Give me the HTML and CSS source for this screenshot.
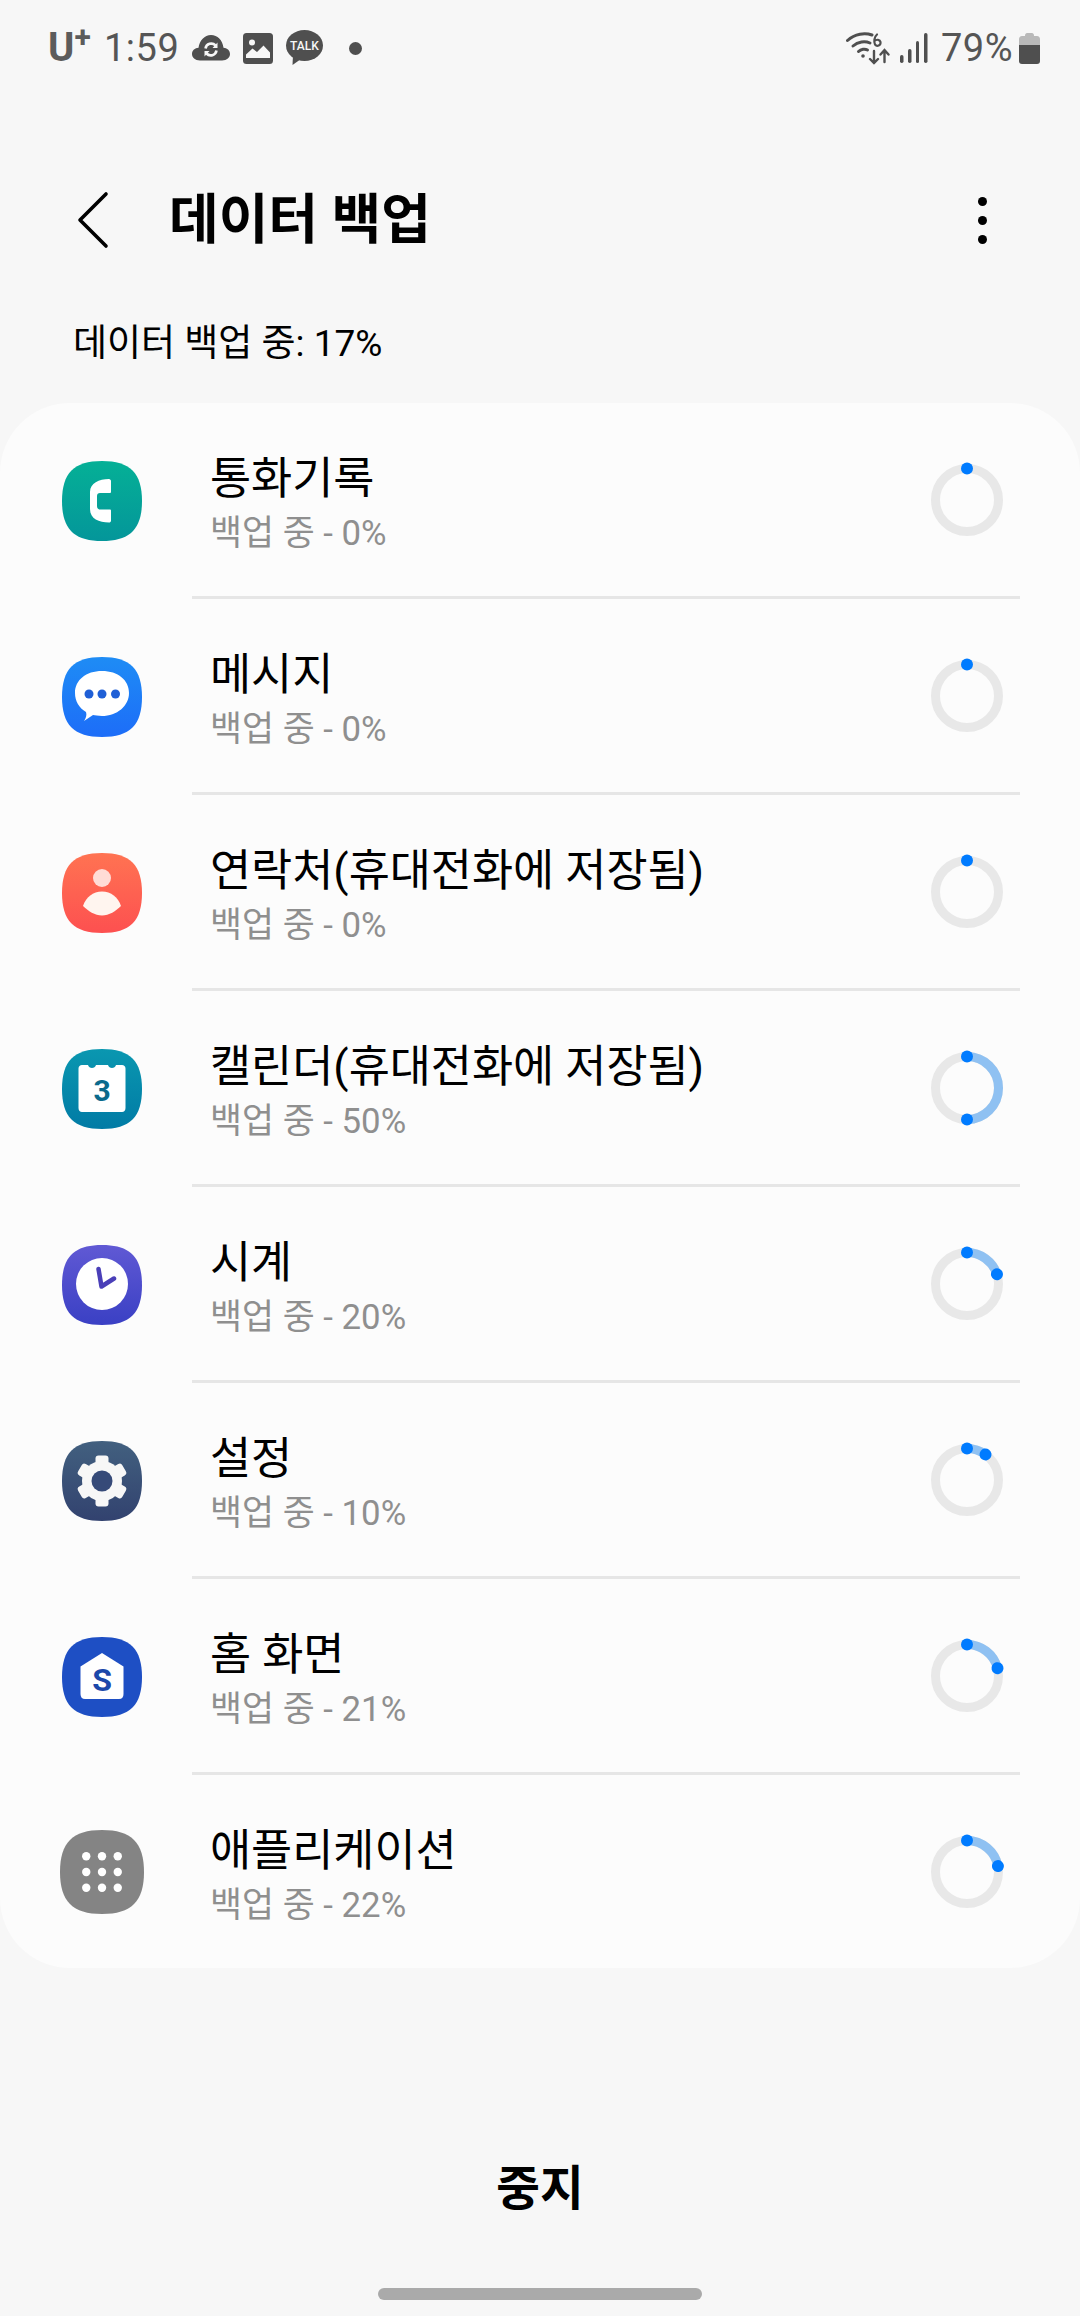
FILE: index.html
```html
<!DOCTYPE html>
<html lang="ko">
<head>
    <meta charset="UTF-8">
    <meta name="viewport" content="width=device-width, initial-scale=1.0">
    <title>데이터 백업</title>
    <link rel="stylesheet" href="styles.css">
</head>
<body>
    <!-- Shared shapes and gradients -->
    <svg class="defs" width="0" height="0">
        <defs>
            <path id="squircle" d="M40 0C68 0 80 12 80 40C80 68 68 80 40 80C12 80 0 68 0 40C0 12 12 0 40 0Z"/>
            <linearGradient id="gradPhone" x1="0" y1="0" x2="0" y2="1"><stop offset="0" stop-color="#05b096"/><stop offset="1" stop-color="#04969a"/></linearGradient>
            <linearGradient id="gradMsg" x1="0" y1="0" x2="0" y2="1"><stop offset="0" stop-color="#1e8cf5"/><stop offset="1" stop-color="#1d6df8"/></linearGradient>
            <linearGradient id="gradContact" x1="0" y1="0" x2="0" y2="1"><stop offset="0" stop-color="#ff7352"/><stop offset="1" stop-color="#fd5050"/></linearGradient>
            <linearGradient id="gradCal" x1="0" y1="0" x2="0" y2="1"><stop offset="0" stop-color="#0a97b0"/><stop offset="1" stop-color="#017ba5"/></linearGradient>
            <linearGradient id="gradClock" x1="0" y1="0" x2="0" y2="1"><stop offset="0" stop-color="#6059d4"/><stop offset="1" stop-color="#3a40c4"/></linearGradient>
            <linearGradient id="gradGear" x1="0" y1="0" x2="0" y2="1"><stop offset="0" stop-color="#42607f"/><stop offset="1" stop-color="#32426f"/></linearGradient>
            <g id="ringDot"><circle cx="40" cy="8.5" r="6" fill="#007bff"/></g>
        </defs>
    </svg>

    <div class="status-bar">
        <div class="status-left">
            <span class="carrier">U<sup>+</sup></span>
            <span class="clock">1:59</span>
            <svg class="st-cloud" width="38" height="26" viewBox="0 0 38 26">
                <path d="M8 25.500C3 25.500 0 22.500 0 19C0 15.500 3 13 6.500 12.800C7.500 5.500 12.500 0 19 0C25.500 0 30.500 5 31.500 12.800C35 13 38 15.500 38 19C38 22.500 35 25.500 30 25.500Z" fill="#4f4f4f"/>
                <path d="M13.500 13.500A5.800 5.800 0 0 1 23.500 10.500M24.500 15.500A5.800 5.800 0 0 1 14.500 18.500" fill="none" stroke="#f7f7f7" stroke-width="2.600"/>
                <path d="M25.500 7.500V13H20.500ZM12.500 21.500V16H17.500Z" fill="#f7f7f7"/>
            </svg>
            <svg class="st-photo" width="30" height="31" viewBox="0 0 30 31">
                <rect width="30" height="31" rx="3.500" fill="#4f4f4f"/>
                <circle cx="9" cy="9.500" r="3" fill="#f7f7f7"/>
                <path d="M3 25V21.500L9.500 15.500L14 19L20.500 12.500L27 19.500V25Z" fill="#f7f7f7"/>
            </svg>
            <svg class="st-talk" width="37" height="36" viewBox="0 0 37 36">
                <ellipse cx="18.500" cy="15.500" rx="18.500" ry="15.500" fill="#4f4f4f"/>
                <path d="M7 25L6.500 35L15 29Z" fill="#4f4f4f"/>
                <text x="18.500" y="20" text-anchor="middle" class="talk-text">TALK</text>
            </svg>
            <span class="st-dot"></span>
        </div>
        <div class="status-right">
            <svg class="st-wifi" width="44" height="33" viewBox="0 0 44 33" fill="none" stroke="#4f4f4f" stroke-linecap="round">
                <path d="M1.500 8.500C9 1.500 19 0.500 26 3" stroke-width="3"/>
                <path d="M7 14C12 9.500 19 8.800 24 11" stroke-width="3"/>
                <path d="M12.500 19.500C15 17 19 16.500 21.500 18" stroke-width="3"/>
                <circle cx="17" cy="24" r="1.800" fill="#4f4f4f" stroke="none"/>
                <path d="M31 2.500C28 5 27.800 10 29 12.500C31 15 35 13.500 34.500 10C34 7.500 30.500 7 28.500 9" stroke-width="2.200"/>
                <path d="M28 19V31M24 27L28 31L32 27M38.500 30V19M34.500 22.500L38.500 18L42.500 22.500" stroke-width="2.400"/>
            </svg>
            <svg class="st-signal" width="28" height="30" viewBox="0 0 28 30" fill="#4f4f4f">
                <rect x="0" y="22" width="3.500" height="8" rx="1.700"/>
                <rect x="8" y="16" width="3.500" height="14" rx="1.700"/>
                <rect x="16" y="8" width="3" height="22" rx="1.500"/>
                <rect x="24" y="0" width="3.500" height="30" rx="1.700"/>
            </svg>
            <span class="battery-text">79%</span>
            <svg class="st-battery" width="21" height="31" viewBox="0 0 21 31">
                <path d="M6 2.500C6 1 7 0 8 0H13C14 0 15 1 15 2.500V3H18C20 3 21 4.500 21 6V12H0V6C0 4.500 1 3 3 3H6Z" fill="#b9b9b9"/>
                <path d="M0 12H21V28C21 30 20 31 18 31H3C1 31 0 30 0 28Z" fill="#4f4f4f"/>
            </svg>
        </div>
    </div>

    <div class="app-bar">
        <svg class="back-icon" width="32" height="58" viewBox="0 0 32 58">
            <path d="M29 3L3 29L29 55" fill="none" stroke="#000" stroke-width="3.600" stroke-linecap="round" stroke-linejoin="round"/>
        </svg>
        <h1 class="app-title">데이터 백업</h1>
        <div class="kebab"><span></span><span></span><span></span></div>
    </div>

    <p class="overall">데이터 백업 중: 17%</p>

    <div class="card">
        <div class="row">
            <svg class="app-icon" viewBox="0 0 80 80">
                <use href="#squircle" fill="url(#gradPhone)"/>
                <path d="M49 20V31C49 31.500 48.500 32 48 32H38C36 32 35 33 35 35V45C35 47 36 48.500 38 48.500H48C48.500 48.500 49 49 49 49.500V59.500C49 61 48 61.500 47 61.500C37 61.500 28 58 28 48V31C28 22 37 18 47 18C48 18 49 19 49 20Z" fill="#fff"/>
            </svg>
            <div class="row-text">
                <div class="row-title">통화기록</div>
                <div class="row-sub">백업 중 - 0%</div>
            </div>
            <svg class="ring" viewBox="0 0 80 80">
                <circle class="ring-track" cx="40" cy="40" r="31.500"/>
                <use href="#ringDot"/>
            </svg>
        </div>
        <div class="divider"></div>

        <div class="row">
            <svg class="app-icon" viewBox="0 0 80 80">
                <use href="#squircle" fill="url(#gradMsg)"/>
                <path d="M40 14C56 14 67 23 67 36C67 49 55 59 40 59C36 59 33 58 31 58C28 60 25 62 22 64C24 61 25 58 24 55C17 51 13 44 13 36C13 23 24 14 40 14Z" fill="#fff"/>
                <circle cx="27" cy="37" r="4.500" fill="#1f5fd6"/>
                <circle cx="40" cy="37" r="4.500" fill="#1f5fd6"/>
                <circle cx="53.500" cy="37" r="4.500" fill="#1f5fd6"/>
            </svg>
            <div class="row-text">
                <div class="row-title">메시지</div>
                <div class="row-sub">백업 중 - 0%</div>
            </div>
            <svg class="ring" viewBox="0 0 80 80">
                <circle class="ring-track" cx="40" cy="40" r="31.500"/>
                <use href="#ringDot"/>
            </svg>
        </div>
        <div class="divider"></div>

        <div class="row">
            <svg class="app-icon" viewBox="0 0 80 80">
                <use href="#squircle" fill="url(#gradContact)"/>
                <circle cx="40" cy="25" r="9" fill="#ffdcd6"/>
                <path d="M21 53C24 44 31 38.500 40 38.500C49 38.500 56 44 59 53C54 58 47 62.500 40 62.500C33 62.500 26 58 21 53Z" fill="#fff5ef"/>
            </svg>
            <div class="row-text">
                <div class="row-title">연락처(휴대전화에 저장됨)</div>
                <div class="row-sub">백업 중 - 0%</div>
            </div>
            <svg class="ring" viewBox="0 0 80 80">
                <circle class="ring-track" cx="40" cy="40" r="31.500"/>
                <use href="#ringDot"/>
            </svg>
        </div>
        <div class="divider"></div>

        <div class="row">
            <svg class="app-icon" viewBox="0 0 80 80">
                <use href="#squircle" fill="url(#gradCal)"/>
                <path d="M20 16H26C27 20 33 20 34 16H46C47 20 53 20 54 16H60C62 16 63.500 17.500 63.500 19.500V59C63.500 61.500 62 63 60 63H20C18 63 16.500 61.500 16.500 59V19.500C16.500 17.500 18 16 20 16Z" fill="#fff"/>
                <text x="40" y="52" text-anchor="middle" class="cal-text">3</text>
            </svg>
            <div class="row-text">
                <div class="row-title">캘린더(휴대전화에 저장됨)</div>
                <div class="row-sub">백업 중 - 50%</div>
            </div>
            <svg class="ring" viewBox="0 0 80 80">
                <circle class="ring-track" cx="40" cy="40" r="31.500"/>
                <circle class="ring-value" cx="40" cy="40" r="31.500" pathLength="100" stroke-dasharray="50 100"/>
                <use href="#ringDot"/>
                <use href="#ringDot" transform="rotate(180 40 40)"/>
            </svg>
        </div>
        <div class="divider"></div>

        <div class="row">
            <svg class="app-icon" viewBox="0 0 80 80">
                <use href="#squircle" fill="url(#gradClock)"/>
                <circle cx="40" cy="39" r="26" fill="#fff"/>
                <path d="M36.500 24L39.500 41.500L52 33.500" fill="none" stroke="#4a3fb8" stroke-width="4.500" stroke-linecap="round" stroke-linejoin="round"/>
            </svg>
            <div class="row-text">
                <div class="row-title">시계</div>
                <div class="row-sub">백업 중 - 20%</div>
            </div>
            <svg class="ring" viewBox="0 0 80 80">
                <circle class="ring-track" cx="40" cy="40" r="31.500"/>
                <circle class="ring-value" cx="40" cy="40" r="31.500" pathLength="100" stroke-dasharray="20 100"/>
                <use href="#ringDot"/>
                <use href="#ringDot" transform="rotate(72 40 40)"/>
            </svg>
        </div>
        <div class="divider"></div>

        <div class="row">
            <svg class="app-icon" viewBox="0 0 80 80">
                <use href="#squircle" fill="url(#gradGear)"/>
                <circle cx="40" cy="40" r="20" fill="#f7f7f7"/>
                <g fill="#f7f7f7">
                    <rect x="33.500" y="14.500" width="13" height="51" rx="3"/>
                    <rect x="33.500" y="14.500" width="13" height="51" rx="3" transform="rotate(60 40 40)"/>
                    <rect x="33.500" y="14.500" width="13" height="51" rx="3" transform="rotate(120 40 40)"/>
                </g>
                <circle cx="40" cy="40" r="10.500" fill="#364a78"/>
            </svg>
            <div class="row-text">
                <div class="row-title">설정</div>
                <div class="row-sub">백업 중 - 10%</div>
            </div>
            <svg class="ring" viewBox="0 0 80 80">
                <circle class="ring-track" cx="40" cy="40" r="31.500"/>
                <circle class="ring-value" cx="40" cy="40" r="31.500" pathLength="100" stroke-dasharray="10 100"/>
                <use href="#ringDot"/>
                <use href="#ringDot" transform="rotate(36 40 40)"/>
            </svg>
        </div>
        <div class="divider"></div>

        <div class="row">
            <svg class="app-icon" viewBox="0 0 80 80">
                <use href="#squircle" fill="#1e4fc4"/>
                <path d="M40 16L61.500 29.500V57C61.500 60 60 62 57 62H23C20 62 18.500 60 18.500 57V29.500Z" fill="#fff"/>
                <text x="40" y="54" text-anchor="middle" class="home-text">S</text>
            </svg>
            <div class="row-text">
                <div class="row-title">홈 화면</div>
                <div class="row-sub">백업 중 - 21%</div>
            </div>
            <svg class="ring" viewBox="0 0 80 80">
                <circle class="ring-track" cx="40" cy="40" r="31.500"/>
                <circle class="ring-value" cx="40" cy="40" r="31.500" pathLength="100" stroke-dasharray="21 100"/>
                <use href="#ringDot"/>
                <use href="#ringDot" transform="rotate(75.600 40 40)"/>
            </svg>
        </div>
        <div class="divider"></div>

        <div class="row">
            <svg class="app-icon app-icon-big" viewBox="0 0 80 80">
                <use href="#squircle" fill="#848484"/>
                <g fill="#fff">
                    <circle cx="25" cy="25" r="4"/><circle cx="40" cy="25" r="4"/><circle cx="55" cy="25" r="4"/>
                    <circle cx="25" cy="40" r="4"/><circle cx="40" cy="40" r="4"/><circle cx="55" cy="40" r="4"/>
                    <circle cx="25" cy="55" r="4"/><circle cx="40" cy="55" r="4"/><circle cx="55" cy="55" r="4"/>
                </g>
            </svg>
            <div class="row-text">
                <div class="row-title">애플리케이션</div>
                <div class="row-sub">백업 중 - 22%</div>
            </div>
            <svg class="ring" viewBox="0 0 80 80">
                <circle class="ring-track" cx="40" cy="40" r="31.500"/>
                <circle class="ring-value" cx="40" cy="40" r="31.500" pathLength="100" stroke-dasharray="22 100"/>
                <use href="#ringDot"/>
                <use href="#ringDot" transform="rotate(79.200 40 40)"/>
            </svg>
        </div>
    </div>

    <div class="stop-button">중지</div>
    <div class="home-bar"></div>
</body>
</html>
```

FILE: styles.css
```css
/* Backup progress screen */
body {
    font-family: 'Roboto', 'Noto Sans CJK KR', sans-serif;
    background-color: #f7f7f7;
    color: #000;
    margin: 0;
    width: 1080px;
    height: 2316px;
    overflow: hidden;
}

.defs {
    display: block;
    height: 0;
}

/* Status bar */
.status-bar {
    display: flex;
    justify-content: space-between;
    align-items: center;
    height: 92px;
    padding: 2px 40px 0 48px;
    color: #555;
}

.status-left,
.status-right {
    display: flex;
    align-items: center;
}

.carrier {
    font-size: 40px;
    font-weight: 700;
    line-height: 46px;
    color: #5c5c5c;
    width: 56px;
}

.carrier sup {
    font-size: 30px;
    line-height: 0;
    vertical-align: 14px;
}

.clock {
    font-size: 38px;
    letter-spacing: 0.5px;
    margin-right: 13px;
}

.st-photo {
    margin-left: 13px;
}

.st-talk {
    margin-left: 13px;
}

.talk-text {
    font-family: 'Roboto', sans-serif;
    font-size: 12px;
    font-weight: 500;
    fill: #f7f7f7;
}

.st-dot {
    width: 13px;
    height: 13px;
    margin-left: 26px;
    border-radius: 50%;
    background-color: #4f4f4f;
}

.st-signal {
    margin-left: 10px;
}

.battery-text {
    font-size: 38px;
    margin-left: 13px;
    letter-spacing: 0.5px;
}

.st-battery {
    margin-left: 6px;
}

/* App bar */
.app-bar {
    display: flex;
    align-items: center;
    height: 72px;
    margin-top: 90px;
    padding: 0 93px 0 77px;
}

.app-title {
    flex: 1;
    font-size: 54px;
    font-weight: 700;
    line-height: 72px;
    margin: 2px 0 0 60px;
}

.kebab {
    display: flex;
    flex-direction: column;
    gap: 10px;
}

.kebab span {
    width: 9px;
    height: 9px;
    border-radius: 50%;
    background-color: #000;
}

.overall {
    font-size: 37px;
    line-height: 50px;
    margin: 63px 0 34px 73px;
}

/* Card with the app rows */
.card {
    background-color: #fcfcfc;
    border-radius: 70px;
}

.row {
    display: flex;
    align-items: center;
    height: 193px;
    padding: 0 73px 0 62px;
    box-sizing: border-box;
}

.app-icon {
    width: 80px;
    height: 80px;
    flex-shrink: 0;
    margin-top: 3px;
}

.app-icon-big {
    width: 84px;
    height: 84px;
    margin-top: 1px;
    margin-left: -2px;
    margin-right: -2px;
}

.row-text {
    flex: 1;
    margin: 4px 0 0 68px;
}

.row-title {
    font-size: 44.7px;
    line-height: 56px;
}

.row-sub {
    font-size: 34.8px;
    line-height: 40px;
    margin-top: 6px;
    color: #8f8f8f;
}

.ring {
    width: 80px;
    height: 80px;
    flex-shrink: 0;
}

.ring-track,
.ring-value {
    fill: none;
    stroke-width: 9;
}

.ring-track {
    stroke: #e8e8e8;
}

.ring-value {
    stroke: #8fc1f2;
    transform: rotate(-90deg);
    transform-origin: 40px 40px;
}

.cal-text {
    font-family: 'Roboto', sans-serif;
    font-size: 30px;
    font-weight: 700;
    fill: #0b6a8c;
}

.home-text {
    font-family: 'Roboto', sans-serif;
    font-size: 32px;
    font-weight: 700;
    fill: #1c48aa;
}

.divider {
    height: 3px;
    margin: 0 60px 0 192px;
    background-color: #e6e6e6;
}

/* Bottom */
.stop-button {
    font-size: 47.5px;
    font-weight: 700;
    line-height: 60px;
    text-align: center;
    margin-top: 191px;
}

.home-bar {
    width: 324px;
    height: 12px;
    margin: 69px auto 0;
    border-radius: 6px;
    background-color: #aaa;
}
```
